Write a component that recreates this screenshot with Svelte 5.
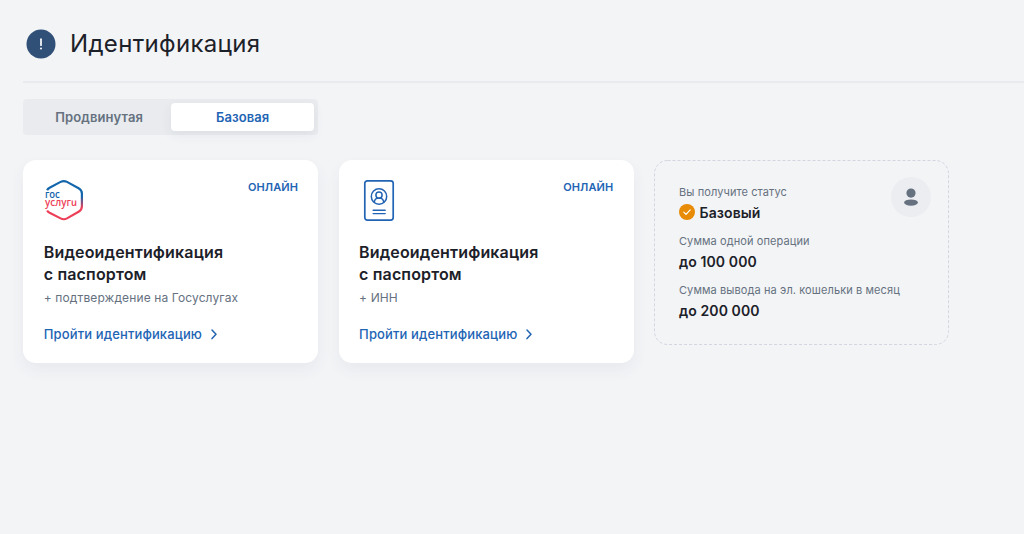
<script>
  const methods = [
    { icon: 'gos', note: '+ подтверждение на Госуслугах' },
    { icon: 'passport', note: '+ ИНН' }
  ];
  const limits = [
    { label: 'Сумма одной операции', value: 'до 100 000' },
    { label: 'Сумма вывода на эл. кошельки в месяц', value: 'до 200 000' }
  ];
  let active = $state('Базовая');
</script>

<main>
  <header>
    <svg class="alert" viewBox="0 0 30 30">
      <circle cx="15" cy="15" r="14.5" fill="#315078" />
      <path d="M15 10.2v6" stroke="#fff" stroke-width="1.7" stroke-linecap="round" />
      <circle cx="15" cy="19.4" r="1" fill="#fff" />
    </svg>
    <h1>Идентификация</h1>
  </header>

  <nav>
    {#each ['Продвинутая', 'Базовая'] as tab}
      <button class:active={active === tab} onclick={() => (active = tab)}>{tab}</button>
    {/each}
  </nav>

  <section class="cards">
    {#each methods as m}
      <article class="card">
        <div class="top">
          {#if m.icon === 'gos'}
            <svg class="logo" viewBox="0 0 42 44">
              <defs>
                <linearGradient id="hex" x1="0" y1="0" x2="0" y2="1">
                  <stop offset="0.4" stop-color="#1466ac" />
                  <stop offset="0.7" stop-color="#ee3f58" />
                </linearGradient>
              </defs>
              <path
                d="M4.1 12.2Q4.8 10.7 6.6 9.7L17.6 3.9Q20.8 2.2 24 3.9L35.6 10.3Q38.9 12.2 38.9 15.6V28.2Q38.9 31.9 35.6 33.8L24 40.4Q20.8 42.1 17.6 40.4L6.6 34.8Q4.8 33.8 4.1 32.5"
                fill="none" stroke="url(#hex)" stroke-width="2.2" />
              <text x="2" y="20.4" textLength="14.8" lengthAdjust="spacingAndGlyphs" fill="#1466ac">гос</text>
              <text x="2.1" y="27.7" textLength="25.8" lengthAdjust="spacingAndGlyphs" fill="#ee3f58">услуг</text>
              <text class="slanted" transform="translate(28.5 27.7) skewX(12)" fill="#ee3f58">и</text>
            </svg>
          {:else}
            <svg class="logo" viewBox="0 0 42 44" fill="none" stroke="#2264b4">
              <rect x="6.8" y="2.8" width="28.4" height="39.3" rx="2.5" stroke-width="1.7" />
              <circle cx="21" cy="18.5" r="7.7" stroke-width="1.5" />
              <circle cx="21" cy="17.1" r="3.1" stroke-width="1.5" />
              <path d="M16.3 24.4c.2-2.6 1.5-4 3.2-4.2h3c1.7.2 3 1.6 3.2 4.2" stroke-width="1.5" />
              <path d="M15.1 32.3H27.2M15.1 35.6H27.2" stroke-width="1.4" stroke-linecap="round" />
            </svg>
          {/if}
          <span class="online">ОНЛАЙН</span>
        </div>
        <h2>Видеоидентификация<br />с паспортом</h2>
        <p class="note">{m.note}</p>
        <div class="link">
          <span>Пройти идентификацию</span>
          <svg viewBox="0 0 8 12"><path d="M2 2 6 6.3 2 10.6" fill="none" stroke="#2264b4" stroke-width="1.5" stroke-linecap="round" stroke-linejoin="round" /></svg>
        </div>
      </article>
    {/each}

    <aside>
      <svg class="outline"><rect x="0.5" y="0.5" width="294" height="184" rx="13" /></svg>
      <div class="facts">
        <div class="label">Вы получите статус</div>
        <div class="value">
          <svg class="check" viewBox="0 0 16 16">
            <circle cx="8" cy="8" r="8" fill="#e88b06" />
            <path d="m4.8 8.1 2.2 2.2 4.2-4.4" fill="none" stroke="#fff" stroke-width="1.2" stroke-linecap="round" stroke-linejoin="round" />
          </svg>
          <span>Базовый</span>
        </div>
        {#each limits as l}
          <div class="label">{l.label}</div>
          <div class="value">{l.value}</div>
        {/each}
      </div>
      <svg class="person" viewBox="0 0 40 40">
        <circle cx="20" cy="20" r="20" fill="#ebedf1" />
        <circle cx="20" cy="16.1" r="4.6" fill="#65717f" />
        <ellipse cx="20" cy="25.6" rx="6.9" ry="3.2" fill="#65717f" />
      </svg>
    </aside>
  </section>
</main>

<style>
  :global(body) { background: #f3f4f6; overflow: hidden; }
  main {
    box-sizing: border-box;
    height: 534px;
    padding-left: 23.4px;
    font-family: Inter, sans-serif;
    color: #1c2129;
  }
  svg { display: block; flex: none; }
  h1, h2, p { margin: 0; }
  header {
    box-sizing: border-box;
    height: 83px;
    padding: 11px 0 4.6px 2.2px;
    border-bottom: 2px solid #e9ebee;
    display: flex;
    align-items: center;
    gap: 14.5px;
  }
  .alert { width: 30px; height: 30px; }
  h1 { font-size: 24px; font-weight: 400; line-height: 30px; letter-spacing: .32px; }
  nav {
    box-sizing: border-box;
    display: flex;
    margin-top: 16px;
    width: 295px;
    height: 36px;
    padding: 4px;
    border-radius: 4px;
    background: #e9ebee;
  }
  button {
    flex: 1;
    padding: 0;
    border: 0;
    border-radius: 4px;
    background: none;
    font: 600 13px/28px Inter, sans-serif;
    letter-spacing: .1px;
    color: #65717f;
  }
  .active {
    background: #fff;
    color: #2264b4;
    box-shadow: 0 4px 12px rgba(60, 75, 130, .07);
  }
  .cards { display: flex; align-items: flex-start; gap: 20.3px; margin-top: 25px; }
  .card {
    box-sizing: border-box;
    width: 295px;
    height: 203px;
    padding: 18px 20.4px 0;
    border-radius: 13px;
    background: #fff;
    box-shadow: 0 7px 15px rgba(60, 75, 110, .06);
  }
  .top { display: flex; justify-content: space-between; height: 63px; }
  .logo { width: 42px; height: 44px; margin-left: -1px; }
  .logo text { font: 600 10.4px "Open Sans", sans-serif; stroke: none; }
  .logo .slanted { font-style: italic; }
  .online { font-size: 11px; font-weight: 600; line-height: 18px; letter-spacing: .1px; color: #2264b4; }
  h2 { font-size: 16px; font-weight: 600; line-height: 22px; letter-spacing: .15px; }
  .note { margin-top: 4px; font-size: 12px; line-height: 18px; letter-spacing: .12px; color: #65717f; }
  .link {
    display: flex;
    align-items: center;
    gap: 7.5px;
    margin-top: 17px;
    font-size: 13px;
    font-weight: 500;
    line-height: 20px;
    letter-spacing: .13px;
    color: #2264b4;
  }
  .link svg { width: 8px; height: 12px; }
  aside {
    position: relative;
    box-sizing: border-box;
    display: flex;
    justify-content: space-between;
    width: 295px;
    height: 185px;
    padding: 17px 18px 0 25px;
  }
  .outline { position: absolute; inset: 0; width: 295px; height: 185px; }
  .outline rect { fill: none; stroke: #d3d5e0; stroke-dasharray: 3 2; }
  .facts { padding-top: 6px; white-space: nowrap; width: 200px; }
  .label { font-size: 11px; line-height: 18px; letter-spacing: .1px; color: #65717f; }
  .value {
    display: flex;
    align-items: center;
    gap: 4.5px;
    height: 22px;
    margin-bottom: 9px;
    font-size: 14px;
    font-weight: 600;
    letter-spacing: .1px;
  }
  .check { width: 16px; height: 16px; }
  .person { width: 40px; height: 40px; }
</style>
